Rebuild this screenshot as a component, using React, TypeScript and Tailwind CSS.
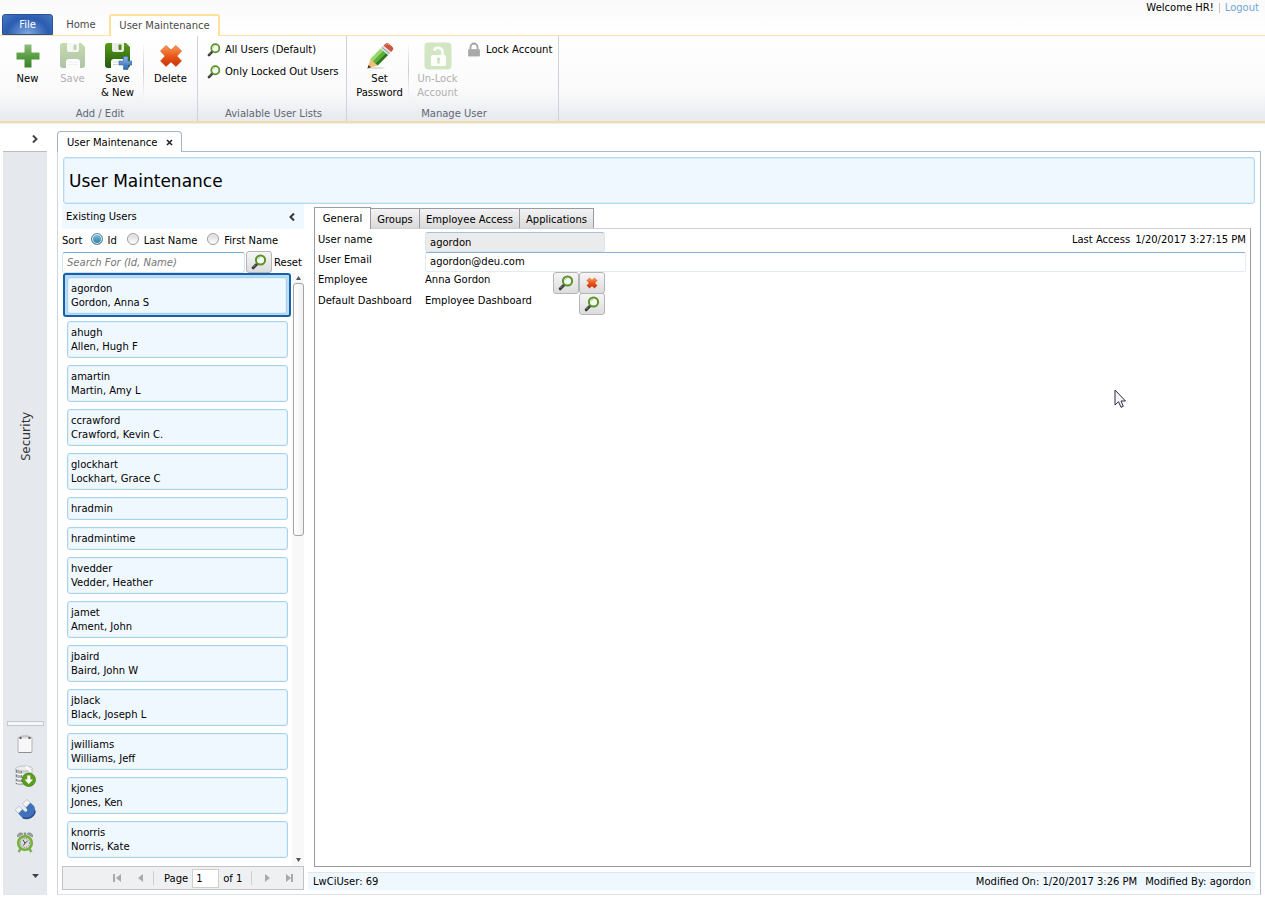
import type { ReactNode } from "react";

const users = [
    { id: "agordon", name: "Gordon, Anna S" },
    { id: "ahugh", name: "Allen, Hugh F" },
    { id: "amartin", name: "Martin, Amy L" },
    { id: "ccrawford", name: "Crawford, Kevin C." },
    { id: "glockhart", name: "Lockhart, Grace C" },
    { id: "hradmin", name: "" },
    { id: "hradmintime", name: "" },
    { id: "hvedder", name: "Vedder, Heather" },
    { id: "jamet", name: "Ament, John" },
    { id: "jbaird", name: "Baird, John W" },
    { id: "jblack", name: "Black, Joseph L" },
    { id: "jwilliams", name: "Williams, Jeff" },
    { id: "kjones", name: "Jones, Ken" },
    { id: "knorris", name: "Norris, Kate" },
];

/* ---------- icons ---------- */

function SearchIcon({ className = "size-4" }: { className?: string }) {
    return (
        <svg viewBox="0 0 16 16" className={className} fill="none" aria-hidden="true">
            <path d="M5.5 10.5L2.2 13.8" stroke="#3a3a3a" strokeWidth="3" strokeLinecap="round" />
            <path d="M4.6 10.8L2.4 13" stroke="#8a8a8a" strokeWidth="1" />
            <circle cx="9.5" cy="6" r="4.6" fill="#f4faf0" stroke="#5b9229" strokeWidth="2" />
            <path d="M6.8 5.4a3 3 0 0 1 2.6-2.3" stroke="#a9cf86" strokeWidth="1" />
        </svg>
    );
}

function PlusIcon() {
    return (
        <svg viewBox="0 0 26 26" className="size-[26px]" aria-hidden="true">
            <defs>
                <linearGradient id="plus" x1="0" y1="0" x2="0" y2="1">
                    <stop offset="0" stopColor="#8fbf7c" />
                    <stop offset="0.5" stopColor="#5a9e42" />
                    <stop offset="1" stopColor="#3c8227" />
                </linearGradient>
            </defs>
            <path d="M9.5 1.5h7v8h8v7h-8v8h-7v-8h-8v-7h8z" fill="url(#plus)" />
        </svg>
    );
}

function FloppyIcon({ faded, plus }: { faded?: boolean; plus?: boolean }) {
    return (
        <svg viewBox="0 0 28 28" className={faded ? "size-7 opacity-35" : "size-7"} aria-hidden="true">
            <defs>
                <linearGradient id="floppy" x1="0" y1="0" x2="0" y2="1">
                    <stop offset="0" stopColor="#5c9b1c" />
                    <stop offset="1" stopColor="#215a0c" />
                </linearGradient>
                <linearGradient id="bluePlus" x1="0" y1="0" x2="0" y2="1">
                    <stop offset="0" stopColor="#8db8ea" />
                    <stop offset="1" stopColor="#2f66b0" />
                </linearGradient>
            </defs>
            <path d="M4 1h18l4 4v18a3 3 0 0 1-3 3H4a3 3 0 0 1-3-3V4a3 3 0 0 1 3-3z" fill="url(#floppy)" />
            <path d="M8 1h12v7a2 2 0 0 1-2 2h-8a2 2 0 0 1-2-2z" fill="#e9ece8" />
            <rect x="14.5" y="2.5" width="3" height="5.5" rx="1" fill="#4e8a1c" />
            <path d="M7 20a3 3 0 0 1 3-3h8a3 3 0 0 1 3 3v6H7z" fill="#fff" />
            <path d="M9 20h10M9 22.5h10" stroke="#c9d0c6" strokeWidth="0.8" />
            {plus && (
                <path d="M19.5 14.5h4.500v4.500h4v4h-4v4.500h-4.500V23h-4.500v-4h4.500z" fill="url(#bluePlus)" stroke="#3567ab" strokeWidth="0.6" />
            )}
        </svg>
    );
}

function CrossIcon({ className }: { className: string }) {
    return (
        <svg viewBox="0 0 24 24" className={className} aria-hidden="true">
            <defs>
                <linearGradient id="cross" x1="0" y1="0" x2="0" y2="1">
                    <stop offset="0" stopColor="#f79a55" />
                    <stop offset="0.5" stopColor="#e85a1c" />
                    <stop offset="1" stopColor="#c92e04" />
                </linearGradient>
            </defs>
            <path
                d="M7 1.500L12 6l5-4.500L22.500 7 18 12l4.500 5-5.500 5.500-5-4.500-5 4.500L1.500 17 6 12 1.500 7z"
                fill="url(#cross)"
                stroke="#d9501c"
                strokeWidth="0.6"
                strokeLinejoin="round"
            />
        </svg>
    );
}

function PencilIcon() {
    return (
        <svg viewBox="0 0 28 28" className="size-7" aria-hidden="true">
            <ellipse cx="10" cy="26" rx="9" ry="1.2" fill="#000" opacity="0.12" />
            <path d="M1.500 26.500l2.800-9.500 7.500 6.500z" fill="#f3c07a" />
            <path d="M1.500 26.500l1-3.500 2.700 2.300z" fill="#4a3a25" />
            <path d="M4.300 17L14.500 6.500l2.500 2.200L6.800 19.200z" fill="#9bd86a" />
            <path d="M6.800 19.200L17 8.700l2.800 2.300L9.300 21.500z" fill="#5cb032" />
            <path d="M9.300 21.500L19.800 11l2.400 2-10.400 10.500z" fill="#2f7a1a" />
            <path d="M14.500 6.500l3-3 7.700 6.500-3 3z" fill="#d9dcdf" />
            <path d="M15.800 5.200l7.700 6.500" stroke="#858b92" strokeWidth="0.8" />
            <path d="M17.500 3.500l1.800-1.800a2.500 2.500 0 0 1 3.300-.1l3.700 3.200a2.500 2.500 0 0 1 .3 3.500l-1.400 1.700z" fill="#d0533c" />
            <path d="M19.500 2.800l2-1 2 1.500" fill="none" stroke="#eca08f" strokeWidth="0.9" />
        </svg>
    );
}

function UnlockIcon() {
    return (
        <svg viewBox="0 0 28 28" className="size-7 opacity-40" aria-hidden="true">
            <rect x="0.500" y="0.500" width="27" height="27" rx="4" fill="#92c46c" />
            <path d="M10 8.500a4.500 4.500 0 0 1 8.500 .8V14" fill="none" stroke="#fff" strokeWidth="2.600" />
            <rect x="7" y="13" width="15" height="11" rx="1.500" fill="#fff" />
            <path d="M14.500 15.500a1.700 1.700 0 0 1 .9 3.100l.3 3h-2.400l.3-3a1.700 1.700 0 0 1 .9-3.100z" fill="#7db552" />
        </svg>
    );
}

function LockIcon() {
    return (
        <svg viewBox="0 0 16 16" className="size-4" aria-hidden="true">
            <path d="M4.500 8V5a3.500 3.500 0 0 1 7 0v3" fill="none" stroke="#a3a3a3" strokeWidth="1.800" />
            <rect x="2" y="7" width="12" height="7.500" rx="1" fill="#b4b4b4" />
            <path d="M2.500 9h11M2.500 11h11M2.500 13h11" stroke="#959595" strokeWidth="0.700" />
        </svg>
    );
}

function ClipboardIcon() {
    return (
        <svg viewBox="0 0 20 20" className="size-5" aria-hidden="true">
            <rect x="3" y="3" width="14" height="15.500" rx="1.500" fill="#f7f7f7" stroke="#b3b3b3" />
            <path d="M5 4.500L6.500 2h7L15 4.500" fill="#dedede" stroke="#9a9a9a" strokeWidth="0.800" />
            <path d="M4.500 4h2M13.500 4h2" stroke="#333" strokeWidth="1.400" />
            <path d="M3.500 18.500h13" stroke="#8f8f8f" />
        </svg>
    );
}

function DatabaseIcon() {
    return (
        <svg viewBox="0 0 22 22" className="size-[22px]" aria-hidden="true">
            <path d="M1.500 3.500v15c2 2 7 2 9 1V4z" fill="#aeb1b4" />
            <path d="M7 4h12v9H7z" fill="#d3d5d8" />
            <path d="M2.500 4v15M7.500 5v14" stroke="#808386" strokeWidth="1" />
            <path d="M1.500 8c2 1.500 6 1.500 8 1M1.500 12.500c2 1.500 6 1.500 8 1M1.500 16.500c2 1.500 5 1.500 7 1.300" stroke="#fff" strokeWidth="1.400" fill="none" />
            <ellipse cx="10" cy="3.500" rx="8.500" ry="2.500" fill="#ececec" stroke="#b5b5b5" strokeWidth="0.700" />
            <path d="M12 1.500l5 5" stroke="#fff" strokeWidth="2" />
            <circle cx="14.800" cy="14.800" r="6.700" fill="#5c9f1e" stroke="#3f7d12" strokeWidth="0.700" />
            <path d="M13.300 10.500h3v4H19l-4.200 4.500-4.200-4.500h2.700z" fill="#fff" />
        </svg>
    );
}

function MagnetIcon() {
    return (
        <svg viewBox="0 0 22 22" className="size-[22px]" aria-hidden="true">
            <path d="M5 8l5.500 5.300c1.500 1.500 3.700-.5 2.300-2.200L8.500 5.500 13 1.500l6.500 6c5 6-3 16.500-12 11.500L1 12z" fill="#3f72b8" />
            <path d="M21 12.500c0 6-7 9.500-12.500 7" fill="none" stroke="#244f92" strokeWidth="1.600" />
            <path d="M5 8l3.300 3.200-3.800 4L1 12zM13 1.500l3.400 3.200-4.600 4.800-3.300-4z" fill="#f3f3f3" stroke="#c2c5ca" strokeWidth="0.600" />
        </svg>
    );
}

function ClockIcon() {
    return (
        <svg viewBox="0 0 20 22" className="h-[22px] w-5" aria-hidden="true">
            <path d="M5.500 18l-2 3M14.500 18l2 3" stroke="#7fae55" strokeWidth="2.400" />
            <path d="M2.500 6a3.200 3.200 0 0 1 5.500-3zM17.500 6a3.200 3.200 0 0 0-5.500-3z" fill="#9a9ea1" stroke="#7c8083" strokeWidth="0.600" />
            <path d="M10 1.500v3" stroke="#8e9295" strokeWidth="2.400" />
            <circle cx="10" cy="12" r="6.800" fill="#dcdcdc" stroke="#74b13c" strokeWidth="2.600" />
            <circle cx="10" cy="12" r="4.500" fill="none" stroke="#6f6f6f" strokeWidth="1" strokeDasharray="1 1.400" />
            <path d="M8 9l2 3 2.500-2M10 12l-1.500 2.500" fill="none" stroke="#444" strokeWidth="1" />
        </svg>
    );
}

/* ---------- small pieces ---------- */

function RibbonButton({ icon, lines, disabled, className = "" }: { icon: ReactNode; lines: string[]; disabled?: boolean; className?: string }) {
    return (
        <button type="button" disabled={disabled} className={`flex flex-col items-center leading-[14px] disabled:text-[#b0b0b0] ${className}`}>
            <span className="mb-[2px] flex h-7 items-center">{icon}</span>
            {lines.map((line) => (
                <span key={line} className="whitespace-nowrap">{line}</span>
            ))}
        </button>
    );
}

function RibbonGroup({ title, className = "", children }: { title: string; className?: string; children: ReactNode }) {
    return (
        <section className={`flex flex-col border-r border-[#cfd3d9] pt-[6px] ${className}`}>
            <div className="flex flex-1 items-start">{children}</div>
            <h2 className="pl-[3px] text-center leading-[14px] text-[#5f6775]">{title}</h2>
        </section>
    );
}

function Divider() {
    return <div className="h-[56px] w-px bg-linear-to-b from-transparent via-[#c9cdd3] to-transparent" />;
}

function IconButton({ label, children }: { label: string; children: ReactNode }) {
    return (
        <button
            type="button"
            aria-label={label}
            className="flex h-[22px] w-[26px] shrink-0 items-center justify-center rounded-[3px] border border-[#b5b5b5] bg-linear-to-b from-[#f6f6f6] to-[#dcdcdc]"
        >
            {children}
        </button>
    );
}

function SortOption({ label, checked }: { label: string; checked?: boolean }) {
    return (
        <label className="flex items-center gap-[5px]">
            <input
                type="radio"
                name="sort"
                defaultChecked={checked}
                className="mb-[3px] size-3 appearance-none rounded-full border border-[#9a9a9a] bg-linear-to-b from-[#d6d6d6] to-white shadow-[inset_0_0_0_1px_#f4f4f4] checked:border-[#6d7d88] checked:from-[#7cc4e2] checked:to-[#1c7ca8]"
            />
            <span>{label}</span>
        </label>
    );
}

function UserCard({ id, name, selected }: { id: string; name: string; selected?: boolean }) {
    const card = (
        <button type="button" className="block w-full rounded-[3px] border border-[#a9d3ec] bg-[#f0f8ff] px-[3px] pt-1 pb-[3px] text-left leading-[14px] shadow-[inset_0_0_0_1px_#e2f1fb]">
            <span className="block">{id}</span>
            {name && <span className="block">{name}</span>}
        </button>
    );

    if (!selected) return <li className="mr-[3px] ml-1">{card}</li>;
    return <li className="-mb-[3px] rounded-[3px] border-2 border-[#1660b0] bg-[#bcdcf2] p-[2px] pb-px">{card}</li>;
}

function PagerButton({ label, path }: { label: string; path: string }) {
    return (
        <button type="button" aria-label={label}>
            <svg viewBox="0 0 9 8" className="h-2 w-[9px]" fill="#a9a9a9" aria-hidden="true">
                <path d={path} />
            </svg>
        </button>
    );
}

/* ---------- page sections ---------- */

function Header() {
    return (
        <header>
            <div className="flex h-[35px] items-start justify-between bg-linear-to-b from-[#fafafa] to-white">
                <nav className="flex h-full items-end">
                    <button type="button" className="ml-[2px] h-[21px] w-[51px] rounded-t-[3px] border border-[#2a5298] bg-[radial-gradient(ellipse_at_bottom,#7fa8e0,#2a5cb0_60%,#4a78c0)] text-white">
                        File
                    </button>
                    <button type="button" className="h-[21px] w-14 text-[#4a4a4a]">Home</button>
                    <button type="button" className="-mb-px h-[22px] w-[111px] rounded-t-[3px] border-2 border-b-0 border-[#ffdf9c] bg-white pb-px text-[#4a4a4a]">
                        User Maintenance
                    </button>
                </nav>
                <div className="flex items-center pt-px pr-[6px] leading-[14px]">
                    <span>Welcome HR!</span>
                    <span className="mx-[5px] h-[10px] w-px bg-[#c4c4c4]" />
                    <a href="#logout" className="text-[#6fa8d8]">Logout</a>
                </div>
            </div>
            <div className="flex h-[88px] border-t border-b-2 border-t-[#ffe3a8] border-b-[#f3dba6] bg-linear-to-b from-white via-[#fafafb] via-65% to-[#e6e9ee] shadow-[0_1px_1px_#eeeeee]">
                <RibbonGroup title="Add / Edit" className="w-[198px]">
                    <RibbonButton icon={<PlusIcon />} lines={["New"]} className="ml-[5px] w-[45px]" />
                    <RibbonButton icon={<FloppyIcon faded />} lines={["Save"]} disabled className="w-[45px]" />
                    <RibbonButton icon={<FloppyIcon plus />} lines={["Save", "& New"]} className="w-[45px]" />
                    <div className="ml-[3px]"><Divider /></div>
                    <RibbonButton icon={<CrossIcon className="size-6" />} lines={["Delete"]} className="w-[53px]" />
                </RibbonGroup>
                <RibbonGroup title="Avialable User Lists" className="w-[149px]">
                    <div className="flex flex-col gap-2 pt-px pl-[9px] leading-[14px]">
                        <button type="button" className="flex items-center gap-1">
                            <SearchIcon className="size-[14px]" />All Users (Default)
                        </button>
                        <button type="button" className="flex items-center gap-1">
                            <SearchIcon className="size-[14px]" />Only Locked Out Users
                        </button>
                    </div>
                </RibbonGroup>
                <RibbonGroup title="Manage User" className="w-[212px]">
                    <RibbonButton icon={<PencilIcon />} lines={["Set", "Password"]} className="ml-1 w-[57px]" />
                    <Divider />
                    <RibbonButton icon={<UnlockIcon />} lines={["Un-Lock", "Account"]} disabled className="w-[57px]" />
                    <button type="button" className="flex items-center gap-1 leading-[14px] whitespace-nowrap">
                        <LockIcon />Lock Account
                    </button>
                </RibbonGroup>
            </div>
        </header>
    );
}

function Sidebar() {
    return (
        <aside className="ml-[3px] flex w-11 shrink-0 flex-col">
            <button type="button" aria-label="Expand" className="flex h-[29px] items-center justify-end border-b border-[#b9bdc2] pt-1 pr-2">
                <svg viewBox="0 0 8 8" className="size-2" fill="none" stroke="#444" strokeWidth="2" aria-hidden="true">
                    <path d="M2 0.500L5.500 4 2 7.500" />
                </svg>
            </button>
            <div className="flex flex-1 flex-col items-center bg-[#e5e9ee]">
                <div className="flex flex-1 items-center justify-center">
                    <span className="rotate-180 font-['Noto_Sans',sans-serif] text-[13px] leading-4 text-[#333] [writing-mode:vertical-rl]">Security</span>
                </div>
                <div className="h-[5px] w-[37px] border border-[#c6cacf] bg-[#f6f7f8]" />
                <div className="flex flex-col items-center gap-[11px] pt-2">
                    <button type="button" aria-label="Clipboard"><ClipboardIcon /></button>
                    <button type="button" aria-label="Import data"><DatabaseIcon /></button>
                    <button type="button" aria-label="Attach"><MagnetIcon /></button>
                    <button type="button" aria-label="Time"><ClockIcon /></button>
                </div>
                <button type="button" aria-label="More" className="mt-[21px] mb-[17px] self-end pr-2">
                    <svg viewBox="0 0 7 4" className="h-1 w-[7px]" fill="#444" aria-hidden="true"><path d="M0 0h7L3.500 4z" /></svg>
                </button>
            </div>
        </aside>
    );
}

function ExistingUsers() {
    return (
        <section className="-ml-px flex w-[242px] shrink-0 flex-col">
            <div className="flex h-[25px] items-center justify-between bg-[#f0f8ff] pr-2 pl-1">
                <h2>Existing Users</h2>
                <button type="button" aria-label="Collapse">
                    <svg viewBox="0 0 8 8" className="size-2" fill="none" stroke="#333" strokeWidth="2" aria-hidden="true">
                        <path d="M6 0.500L2.500 4 6 7.500" />
                    </svg>
                </button>
            </div>
            <div className="flex h-[22px] items-end pb-[3px] leading-[14px]">
                <span className="mr-2">Sort</span>
                <div className="flex gap-[10px]">
                    <SortOption label="Id" checked />
                    <SortOption label="Last Name" />
                    <SortOption label="First Name" />
                </div>
            </div>
            <div className="flex h-[22px] items-center">
                <input
                    type="text"
                    aria-label="Search users"
                    placeholder="Search For (Id, Name)"
                    className="mr-px h-[21px] min-w-0 flex-1 rounded-[3px] border border-[#d3e6f5] border-t-[#7aa7cc] px-1 placeholder:text-[#757575] placeholder:italic"
                />
                <IconButton label="Search"><SearchIcon /></IconButton>
                <button type="button" className="w-8 pl-[2px] text-left">Reset</button>
            </div>
            <div className="flex flex-1">
                <ul className="flex min-w-0 flex-1 flex-col gap-[7px] pl-px">
                    {users.map((u) => (
                        <UserCard key={u.id} id={u.id} name={u.name} selected={u.id === "agordon"} />
                    ))}
                </ul>
                <div className="ml-px flex w-3 flex-col items-center bg-[#f8f8f8]">
                    <svg viewBox="0 0 5 4" className="mt-[3px] mb-[3px] h-1 w-[5px]" fill="#555" aria-hidden="true"><path d="M0 4h5L2.500 0z" /></svg>
                    <div className="h-[253px] w-[11px] rounded-[3px] border border-[#a5a5a5] bg-linear-to-r from-white to-[#f0f0f0]" />
                    <svg viewBox="0 0 5 4" className="mt-auto mb-1 h-1 w-[5px]" fill="#555" aria-hidden="true"><path d="M0 0h5L2.500 4z" /></svg>
                </div>
            </div>
            <div className="flex h-6 items-center border border-[#c3c3c3] bg-[#eff0f2] pl-[50px]">
                <PagerButton label="First page" path="M0 0h2v8H0zM8 0v8L3 4z" />
                <span className="w-[14px]" />
                <PagerButton label="Previous page" path="M7 0v8L2 4z" />
                <span className="mr-[10px] ml-[8px] h-[14px] w-px bg-[#cfcfcf]" />
                <label htmlFor="page">Page</label>
                <input id="page" type="text" defaultValue="1" className="mx-1 h-[19px] w-[27px] border border-[#cfcfcf] bg-white px-[3px]" />
                <span>of 1</span>
                <span className="mr-[11px] ml-[9px] h-[14px] w-px bg-[#cfcfcf]" />
                <PagerButton label="Next page" path="M2 0v8l5-4z" />
                <span className="w-[13px]" />
                <PagerButton label="Last page" path="M1 0v8l5-4zM6 0h2v8H6z" />
            </div>
        </section>
    );
}

function UserDetail() {
    const tab = "h-5 border border-b-0 border-l-0 border-[#9a9aa2] bg-linear-to-b from-[#f3f3f3] to-[#dadada] pt-[2px]";

    return (
        <section className="flex min-w-0 flex-1 flex-col pt-[3px]">
            <div className="mr-1 ml-[10px] flex flex-1 flex-col">
                <div className="flex items-end">
                    <button type="button" className="z-10 -mb-px h-[22px] w-[57px] border border-b-0 border-[#9a9aa2] bg-white">General</button>
                    <button type="button" className={`${tab} w-[49px]`}>Groups</button>
                    <button type="button" className={`${tab} w-[100px]`}>Employee Access</button>
                    <button type="button" className={`${tab} w-[74px]`}>Applications</button>
                </div>
                <form className="grid flex-1 grid-cols-[107px_180px_1fr] content-start border border-[#9a9aa2] border-t-[#d0d0d4] pt-[2px] pr-1 pl-[3px] leading-[14px]">
                    <label htmlFor="username" className="h-5 pt-[2px]">User name</label>
                    <input id="username" type="text" readOnly defaultValue="agordon" className="mt-px h-5 w-[180px] rounded-[3px] border border-[#d9e6f0] border-t-[#a0c4e0] bg-[#ebebeb] px-1" />
                    <div className="flex justify-end gap-[5px] pt-[2px] whitespace-nowrap">
                        <span>Last Access</span>
                        <span>1/20/2017 3:27:15 PM</span>
                    </div>
                    <label htmlFor="email" className="pt-px">User Email</label>
                    <input id="email" type="email" defaultValue="agordon@deu.com" className="col-span-2 h-5 rounded-[2px] border border-[#e2ecf6] border-t-[#8fb0ce] px-1 pb-[2px]" />
                    <span className="pt-px">Employee</span>
                    <div className="flex h-[21px] justify-between">
                        <span className="pt-px">Anna Gordon</span>
                        <div className="flex">
                            <IconButton label="Find employee"><SearchIcon /></IconButton>
                            <IconButton label="Clear employee"><CrossIcon className="size-3" /></IconButton>
                        </div>
                    </div>
                    <span />
                    <span className="pt-px">Default Dashboard</span>
                    <div className="flex justify-between">
                        <span className="pt-px">Employee Dashboard</span>
                        <IconButton label="Find dashboard"><SearchIcon /></IconButton>
                    </div>
                </form>
            </div>
            <footer className="mt-[5px] ml-1 flex h-[18px] items-center justify-between border-t border-[#dfe6ec] bg-[#f0f8ff] pr-1 pb-px pl-[5px]">
                <span>LwCiUser: 69</span>
                <div className="flex gap-2">
                    <span>Modified On: 1/20/2017 3:26 PM</span>
                    <span>Modified By: agordon</span>
                </div>
            </footer>
        </section>
    );
}

export default function App() {
    return (
        <div className="flex min-h-screen flex-col bg-white font-['DejaVu_Sans',Verdana,sans-serif] text-[10px] text-black">
            <Header />
            <div className="flex flex-1 pb-1">
                <Sidebar />
                <main className="mt-2 mr-1 ml-[10px] flex min-w-0 flex-1 flex-col">
                    <div className="z-10 -mb-px flex h-[21px] w-[125px] items-center rounded-t-[4px] border border-b-0 border-[#9fb4c8] bg-white pl-[9px]">
                        <span>User Maintenance</span>
                        <button type="button" aria-label="Close tab" className="ml-[9px]">
                            <svg viewBox="0 0 7 7" className="size-[7px]" stroke="#222" strokeWidth="1.600" aria-hidden="true">
                                <path d="M1 1l5 5M6 1L1 6" />
                            </svg>
                        </button>
                    </div>
                    <div className="flex flex-1 flex-col border border-[#a9bccd] border-b-[#dbe3ea] border-l-[#cbd7e2] px-[5px] pt-[5px] pb-1">
                        <div className="flex h-[47px] items-center rounded-[3px] border border-[#b0d8ee] bg-[#f0f8ff] pt-[2px] pl-[5px] shadow-[inset_0_0_0_1px_#dceefa]">
                            <h1 className="text-[17px]">User Maintenance</h1>
                        </div>
                        <div className="flex flex-1">
                            <ExistingUsers />
                            <UserDetail />
                        </div>
                    </div>
                </main>
            </div>
            <svg viewBox="0 0 12 19" className="pointer-events-none absolute top-[389px] left-[1114px] h-[19px] w-3" aria-hidden="true">
                <path d="M1 1v15l3.500-3.300L7 18.300l2.300-1L7 12h4.500z" fill="#f4f4f6" stroke="#2b2b45" strokeWidth="1" />
            </svg>
        </div>
    );
}
